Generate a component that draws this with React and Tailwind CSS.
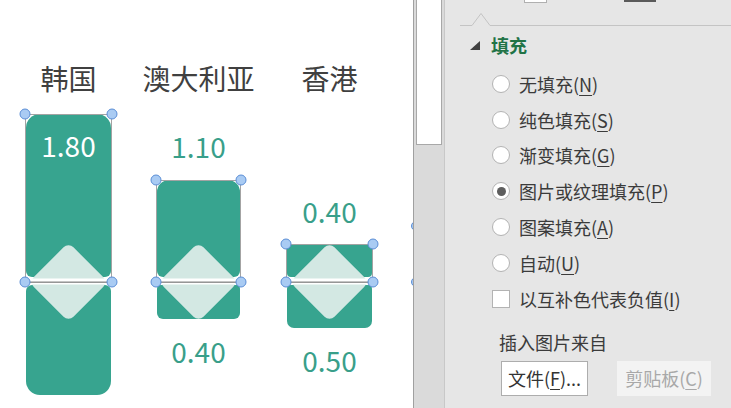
import React from "react";

function rr(x, y, w, h, rt, rb) {
  return `M${x + rt},${y} H${x + w - rt} A${rt},${rt} 0 0 1 ${x + w},${y + rt} V${y + h - rb} A${rb},${rb} 0 0 1 ${x + w - rb},${y + h} H${x + rb} A${rb},${rb} 0 0 1 ${x},${y + h - rb} V${y + rt} A${rt},${rt} 0 0 1 ${x + rt},${y} Z`;
}

const BAR = "#37a48f";
const DIAMOND = "#d3e8e3";
const GREEN_TXT = "#399f8a";

function Bar({ w, sel, top, bottom, texts }) {
  const cx = w / 2;
  const mid = 184;
  const s = 56;
  return (
    <svg width={w} height={310} viewBox={`0 0 ${w} 310`} overflow="visible" className="block">
      <path d={rr(1, top.y, w - 2, top.h, top.rt, top.rb)} fill={BAR} />
      <path d={rr(1, bottom.y, w - 2, bottom.h, bottom.rt, bottom.rb)} fill={BAR} />
      <rect
        x={cx - s / 2}
        y={mid - s / 2}
        width={s}
        height={s}
        rx={7}
        fill={DIAMOND}
        transform={`rotate(45 ${cx} ${mid})`}
      />
      <rect x={0} y={180.5} width={w} height={6} fill="#ffffff" />
      <rect x={0.5} y={sel + 0.5} width={w - 1} height={mid - sel} fill="none" stroke="#a3a3a3" strokeWidth={1} />
      <line x1={0} y1={mid} x2={w} y2={mid} stroke="#8a8a8a" strokeWidth={1.2} />
      {[
        [0, sel],
        [w, sel],
        [0, mid],
        [w, mid],
      ].map(([hx, hy], i) => (
        <circle key={i} cx={hx} cy={hy} r={5} fill="#a9cbf3" stroke="#5b8ed6" strokeWidth={1} />
      ))}
      {texts.map((t, i) => (
        <text key={i} x={cx} y={t.y} textAnchor="middle" fontSize={28} fill={t.c}>
          {t.t}
        </text>
      ))}
    </svg>
  );
}

function Column({ title, className, children }) {
  return (
    <div className={`flex flex-col items-center w-[87px] shrink-0 ${className}`}>
      <div className="h-[40px] leading-[40px] text-[28px] text-[#404040] whitespace-nowrap">{title}</div>
      {children}
    </div>
  );
}

function Radio({ label, u, after = "", checked }) {
  return (
    <div className="flex items-center h-[35.8px] pl-[47px] gap-[9px]">
      <div className="w-[18px] h-[18px] rounded-full border border-[#b3b3b3] bg-white flex items-center justify-center">
        {checked && <div className="w-[9px] h-[9px] rounded-full bg-[#5e5e5e]" />}
      </div>
      <span className="text-[18px] leading-none text-[#3b3b3b] whitespace-nowrap">
        {label}(<span className="underline underline-offset-[3px] decoration-1">{u}</span>){after}
      </span>
    </div>
  );
}

export default function App() {
  return (
    <div className="flex w-[731px] h-[408px] overflow-hidden bg-white font-['Noto_Sans_CJK_SC',sans-serif]">
      {/* chart area */}
      <div className="relative w-[413px] h-full bg-white flex items-start pt-[58px] shrink-0 overflow-hidden">
        <Column title="韩国" className="ml-[25px]">
          <Bar
            w={87}
            sel={16}
            top={{ y: 16, h: 163, rt: 14, rb: 6 }}
            bottom={{ y: 187, h: 110, rt: 6, rb: 14 }}
            texts={[{ t: "1.80", y: 59, c: "#ffffff" }]}
          />
        </Column>
        <Column title="澳大利亚" className="ml-[43px]">
          <Bar
            w={85}
            sel={82}
            top={{ y: 82, h: 97, rt: 12, rb: 6 }}
            bottom={{ y: 187, h: 34, rt: 4, rb: 6 }}
            texts={[
              { t: "1.10", y: 60, c: GREEN_TXT },
              { t: "0.40", y: 265, c: GREEN_TXT },
            ]}
          />
        </Column>
        <Column title="香港" className="ml-[44px]">
          <Bar
            w={87}
            sel={146}
            top={{ y: 146, h: 33, rt: 3, rb: 4 }}
            bottom={{ y: 187, h: 43, rt: 4, rb: 7 }}
            texts={[
              { t: "0.40", y: 125, c: GREEN_TXT },
              { t: "0.50", y: 274, c: GREEN_TXT },
            ]}
          />
        </Column>
        {/* clipped handles of a fourth shape */}
        <div className="absolute left-[411px] top-[221px] w-[10px] h-[10px] rounded-full bg-[#a9cbf3] border border-[#5b8ed6]" />
        <div className="absolute left-[411px] top-[277px] w-[10px] h-[10px] rounded-full bg-[#a9cbf3] border border-[#5b8ed6]" />
      </div>

      {/* scrollbar */}
      <div className="w-[32px] h-full shrink-0 border-l border-r border-l-[#a0a0a0] border-r-[#c8c8c8] bg-[#dadada]">
        <div className="ml-[2px] w-[26px] h-[145px] bg-white border border-t-0 border-[#a8a8a8]" />
      </div>

      {/* format panel */}
      <div className="relative w-[286px] h-full shrink-0 bg-[#e6e6e6] flex flex-col">
        <div className="absolute left-[79px] top-0 w-[23px] h-[3px] bg-white border border-t-0 border-[#b0b0b0]" />
        <div className="absolute left-[179px] top-0 w-[32px] h-[2px] bg-[#5a5a5a]" />

        <div className="h-[27px] pl-[15px] pt-[10px]">
          <svg width="271" height="17" className="block">
            <polyline
              points="0,15.5 12,15.5 21,3.5 30,15.5 271,15.5"
              fill="none"
              stroke="#c4c4c4"
              strokeWidth="1"
            />
          </svg>
        </div>

        <div className="flex items-center h-[35px] pl-[25px]">
          <svg width="10" height="10" className="block mt-[3px]">
            <polygon points="10,0 10,9 0,9" fill="#404040" />
          </svg>
          <span className="ml-[11px] text-[18px] leading-none font-bold text-[#217346]">填充</span>
        </div>

        <div className="mt-[4px] flex flex-col">
          <Radio label="无填充" u="N" />
          <Radio label="纯色填充" u="S" />
          <Radio label="渐变填充" u="G" />
          <Radio label="图片或纹理填充" u="P" checked />
          <Radio label="图案填充" u="A" />
          <Radio label="自动" u="U" />
          <div className="flex items-center h-[35.8px] pl-[47px] gap-[9px]">
            <div className="w-[18px] h-[18px] border border-[#b3b3b3] bg-white" />
            <span className="text-[18px] leading-none text-[#3b3b3b] whitespace-nowrap">
              以互补色代表负值(<span className="underline underline-offset-[3px] decoration-1">I</span>)
            </span>
          </div>
        </div>

        <div className="mt-[13px] h-[24px] leading-[24px] pl-[54px] text-[18px] text-[#3b3b3b]">插入图片来自</div>

        <div className="mt-[7px] flex pl-[56px] gap-[29px]">
          <div className="w-[87px] h-[35px] bg-white border border-[#adadad] flex items-center justify-center text-[18px] leading-none text-[#333333] whitespace-nowrap">
            文件(<span className="underline underline-offset-[3px] decoration-1">F</span>)...
          </div>
          <div className="w-[94px] h-[35px] bg-[#f3f3f3] flex items-center justify-center text-[18px] leading-none text-[#a8a8a8] whitespace-nowrap">
            剪贴板(<span className="underline underline-offset-[3px] decoration-1">C</span>)
          </div>
        </div>
      </div>
    </div>
  );
}
